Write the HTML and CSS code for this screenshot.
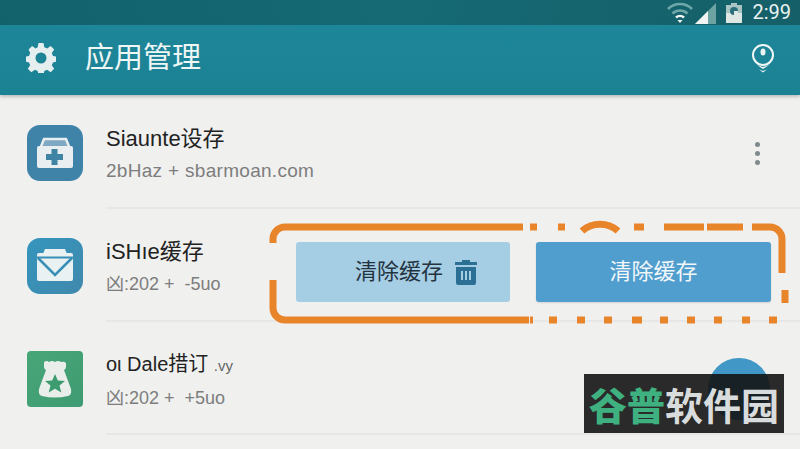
FILE: index.html
```html
<!DOCTYPE html>
<html lang="zh-CN">
<head>
<meta charset="utf-8">
<title>应用管理</title>
<link rel="stylesheet" href="styles.css">
</head>
<body>
<div class="screen">
  <div class="status">
    <svg class="st-wifi" viewBox="0 0 28 24" width="28" height="24">
      <path d="M2 8a17 17 0 0 1 24 0" class="wifi-dim"/>
      <path d="M6.500 12.500a11 11 0 0 1 15 0" class="wifi-dim"/>
      <path d="M10 16.500a6 6 0 0 1 8 0" class="wifi-on"/>
      <path d="M11.500 19h5L14 22z" fill="#f2f7f6"/>
    </svg>
    <svg class="st-signal" viewBox="0 0 22 22" width="22" height="22">
      <path d="M0 22 21 1v21z" fill="#6ea3a4"/>
      <path d="M0 22 13 9v13z" fill="#f1f4f2"/>
    </svg>
    <svg class="st-batt" viewBox="0 0 16 20" width="16" height="20">
      <path d="M0 2h5V0h6v2h5v18H0z" fill="#dfe7e4"/>
      <path d="M0 2h5V0h6v2h5v8H0z" fill="#a9c4c2"/>
      <circle cx="8" cy="8" r="4" fill="#2c6f7c"/>
      <path d="M8 8h4v4H8z" fill="#dfe7e4"/>
    </svg>
    <span class="time">2:99</span>
  </div>
  <header class="appbar">
    <svg class="gear" viewBox="0 0 30 30" width="30" height="30">
      <path fill-rule="evenodd" d="M12.500 0h5l.8 4.200 2.800 1.200 3.600-2.400 3.500 3.500-2.400 3.600 1.200 2.800 4 .7v5l-4 .8-1.200 2.800 2.400 3.500-3.500 3.500-3.600-2.400-2.800 1.200-.8 4.200h-5l-.8-4.200-2.800-1.200-3.600 2.400-3.500-3.500 2.400-3.500-1.200-2.800-4-.8v-5l4-.7 1.200-2.800L2.600 6.500 6.100 3l3.600 2.400 2-1.200zM15 9.500a5.500 5.500 0 1 0 0 11 5.500 5.500 0 0 0 0-11z" fill="#e6efef"/>
    </svg>
    <h1 class="title">应用管理</h1>
    <svg class="pin" viewBox="0 0 24 30" width="24" height="30">
      <circle cx="12" cy="11" r="10" fill="none" stroke="#f1f7f7" stroke-width="2"/>
      <ellipse cx="12" cy="8" rx="2.500" ry="3.500" fill="#eef5f5"/>
      <path d="M6 21l6 4 6-4-6 2z" fill="#f1f7f7"/>
      <path d="M8 25.500l4 3 4-3-4 1.500z" fill="#f1f7f7"/>
    </svg>
  </header>

  <main class="list">
    <section class="row">
      <div class="tile tile-blue">
        <svg viewBox="0 0 56 56" width="56" height="56">
          <path d="M13 24l4-10h22l4 10" fill="#7fa9c2" stroke="#e9eff0" stroke-width="2.500"/>
          <rect x="10" y="21" width="36" height="22" rx="2" fill="#e9eff0"/>
          <path d="M24.500 24h6v5h5.500v6h-5.500v5h-6v-5H19v-6h5.500z" fill="#3f83a5"/>
        </svg>
      </div>
      <div class="body">
        <div class="text">
          <div class="name">Siaunte设存</div>
          <div class="sub sub-wide">2bHaz + sbarmoan.com</div>
        </div>
        <div class="kebab"><i></i><i></i><i></i></div>
      </div>
    </section>

    <section class="row">
      <div class="tile tile-sky">
        <svg viewBox="0 0 56 56" width="56" height="56">
          <path d="M16 16l2-5h20l2 5z" fill="#e9f1f3"/>
          <rect x="10" y="15" width="36" height="28" rx="2" fill="#e9f1f3"/>
          <path d="M11 20l17 17 17-17" fill="none" stroke="#3a8fb7" stroke-width="2.500"/>
          <path d="M10 19.500h36" stroke="#3a8fb7" stroke-width="2"/>
        </svg>
      </div>
      <div class="body">
        <div class="text">
          <div class="name">iSHıe缓存</div>
          <div class="sub">凶:202 + &nbsp;-5uo</div>
        </div>
        <div class="actions">
          <button class="btn btn-light">清除缓存
            <svg viewBox="0 0 22 26" width="22" height="26">
              <path d="M7 1h8v2h7v3H0V3h7z" fill="#2b6f95"/>
              <path d="M1 8h20v16a2 2 0 0 1-2 2H3a2 2 0 0 1-2-2z" fill="#2b6f95"/>
              <path d="M6 12h2v9H6zM10 12h2v9h-2zM14 12h2v9h-2z" fill="#a5cde4"/>
            </svg>
          </button>
          <button class="btn btn-solid">清除缓存</button>
        </div>
      </div>
    </section>

    <section class="row">
      <div class="tile tile-green">
        <svg viewBox="0 0 56 56" width="56" height="56">
          <path d="M17 11q3-2 5 0q3-2 6 0q3-2 6 0q3-1 5 1v4q0 2-2 3L44 38q1 6-3 7q-13 3-26 0q-4-1-3-7L19 19q-2-1-2-3z" fill="#e9eeea"/>
          <path d="M28 23l2.800 6.500 7.200.5-5.500 4.500 1.800 7-6.300-3.800-6.300 3.800 1.800-7L18 30l7.200-.5z" fill="#3d9b70"/>
        </svg>
      </div>
      <div class="body">
        <div class="text">
          <div class="name name-tight">oι Dale措订 <small>.vy</small></div>
          <div class="sub">凶:202 + &nbsp;+5uo</div>
        </div>
      </div>
    </section>
  </main>

  <svg class="frame" viewBox="0 0 800 449" width="800" height="449">
    <path d="M273 243v-4a12 12 0 0 1 12-12h238"/>
    <path d="M273 280v28a12 12 0 0 0 12 12h244"/>
    <path d="M530 227h7M558 227h7M582 231c10-9 26-9 36 0M634 227h10M664 227h40M707 227h36M752 227h18a12 12 0 0 1 12 12v34M785 290v13"/>
    <path d="M530 320h3M549 320h8M577 320h8M604 320h8M632 320h10M660 320h8M687 320h8M714 320h8M742 320h8M769 320h8"/>
  </svg>

  <div class="fab"></div>
  <div class="watermark"><b>谷普</b>软件园</div>
</div>
</body>
</html>
```
FILE: styles.css
```css
* { box-sizing: border-box; }
html, body { margin: 0; padding: 0; }
body {
  width: 800px;
  height: 449px;
  overflow: hidden;
  font-family: "Liberation Sans", "Noto Sans CJK SC", sans-serif;
  background: #f0f0ef;
}
.screen {
  position: relative;
  width: 800px;
  height: 449px;
  overflow: hidden;
  display: flex;
  flex-direction: column;
}
.status {
  height: 25px;
  flex: none;
  background: linear-gradient(90deg, #12626c, #156a74 50%, #155f68);
  display: flex;
  align-items: center;
  justify-content: flex-end;
  padding-right: 9px;
}
.st-wifi { margin-right: 1px; }
.st-signal { margin-right: 9px; }
.st-batt { margin-right: 10px; }
.wifi-dim { fill: none; stroke: #6ea8aa; stroke-width: 2.500; }
.wifi-on { fill: none; stroke: #f2f7f6; stroke-width: 2.500; }
.time {
  font: 20px/25px Roboto, "Liberation Sans", sans-serif;
  color: #eaf2f1;
}
.appbar {
  height: 70px;
  flex: none;
  background: linear-gradient(180deg, #1d8698, #1b8294);
  box-shadow: 0 2px 3px rgba(90, 110, 110, .35);
  display: flex;
  align-items: center;
  padding: 0 25px 5px 26px;
  position: relative;
  z-index: 1;
}
.title {
  margin: 0 0 0 29px;
  flex: 1;
  font-size: 29px;
  font-weight: 400;
  line-height: 40px;
  color: #eef6f6;
}
.pin { margin-top: 2px; }
.list {
  flex: 1;
  display: flex;
  flex-direction: column;
  background: #f0f0ef;
  padding-top: 1px;
}
.row {
  height: 113px;
  flex: none;
  display: flex;
  align-items: center;
  padding-left: 27px;
}
.tile {
  width: 56px;
  height: 56px;
  flex: none;
  margin-right: 23px;
  border-radius: 13px;
  overflow: hidden;
}
.tile svg { display: block; }
.tile-blue { background: #3f83a9; }
.tile-sky { background: linear-gradient(135deg, #3595bc, #4089ad); }
.tile-green { background: linear-gradient(135deg, #47a678, #3f9b72); border-radius: 4px; }
.body {
  flex: 1;
  align-self: stretch;
  display: flex;
  align-items: center;
  justify-content: space-between;
  border-bottom: 2px solid #e7e7e6;
  padding: 6px 29px 0 0;
}
.text { display: flex; flex-direction: column; gap: 9px; }
.name {
  font-size: 22px;
  line-height: 24px;
  color: #222;
  white-space: nowrap;
}
.name-tight { font-size: 20px; }
.name small { font-size: 15px; color: #666; }
.sub {
  font-size: 18px;
  line-height: 22px;
  color: #7d7d7d;
  white-space: nowrap;
}
.sub-wide { font-size: 19px; letter-spacing: .3px; }
.kebab {
  display: flex;
  flex-direction: column;
  gap: 4px;
  margin-right: 11px;
  margin-bottom: 3px;
}
.kebab i {
  width: 5px;
  height: 5px;
  border-radius: 50%;
  background: #7f8a8c;
}
.actions { display: flex; gap: 26px; margin-top: 9px; }
.btn {
  height: 60px;
  border: 0;
  border-radius: 3px;
  font: 22px/30px "Liberation Sans", "Noto Sans CJK SC", sans-serif;
  display: flex;
  align-items: center;
  justify-content: center;
  padding: 0;
}
.btn-light {
  width: 214px;
  background: #a5cde4;
  color: #24343f;
  gap: 12px;
  padding-left: 26px;
}
.btn-solid {
  width: 235px;
  background: #509ece;
  color: #f2f7fa;
  box-shadow: 0 1px 2px rgba(0, 0, 0, .12);
}
.frame {
  position: absolute;
  left: 0;
  top: 0;
  fill: none;
  stroke: #e8842a;
  stroke-width: 7;
  pointer-events: none;
}
.fab {
  position: absolute;
  left: 708px;
  top: 358px;
  width: 62px;
  height: 62px;
  border-radius: 50%;
  background: #4198c6;
}
.watermark {
  position: absolute;
  left: 584px;
  top: 374px;
  width: 200px;
  height: 59px;
  background: rgba(20, 20, 20, .9);
  color: #d9dcdc;
  font: 700 38px/59px "Noto Sans CJK SC", sans-serif;
  text-align: center;
  white-space: nowrap;
}
.watermark b { color: #3fb180; font-weight: 900; }
```
